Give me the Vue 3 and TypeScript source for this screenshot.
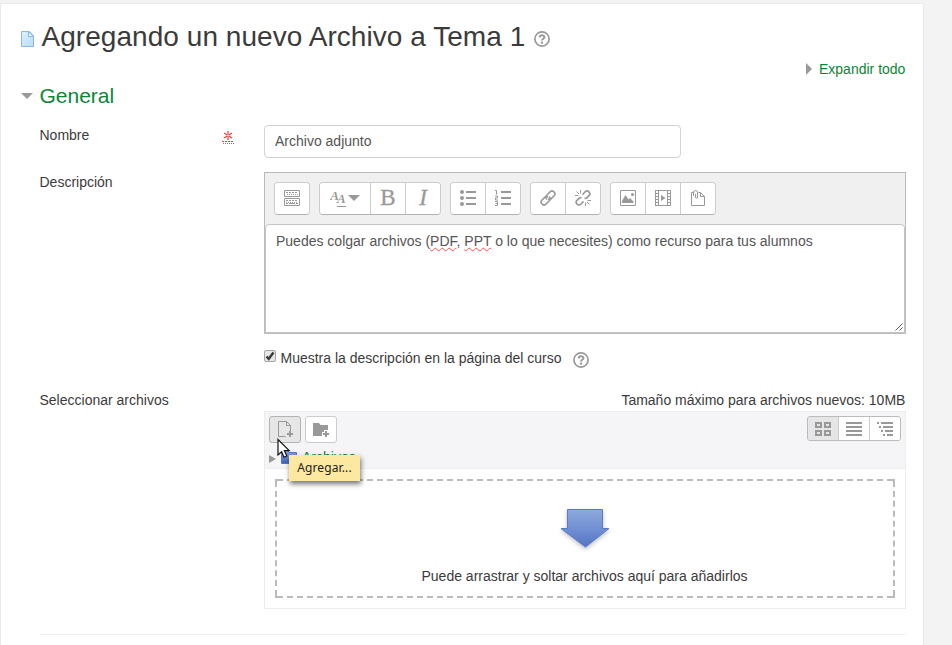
<script setup lang="ts">
import { ref } from 'vue'

const nombre = ref('Archivo adjunto')
const mostrar = ref(true)
</script>

<template>
  <main class="card">
    <header class="title">
      <svg class="doc" width="14" height="17" viewBox="0 0 14 17">
        <defs>
          <linearGradient id="docFill" x1="0" y1="0" x2="1" y2="1">
            <stop offset="0" stop-color="#d9f1fe" /><stop offset="1" stop-color="#b9dcf8" />
          </linearGradient>
        </defs>
        <path d="M.5 .5H8.500L12.500 5V15.500H.5Z" fill="url(#docFill)" stroke="#8fb3ee" />
        <path d="M7.500 .5V5.500H12.500Z" fill="#edf8ff" stroke="#8fb3ee" />
      </svg>
      <h2>Agregando un nuevo Archivo a Tema 1</h2>
      <svg class="help" width="16" height="16" viewBox="0 0 16 16">
        <circle cx="8" cy="8" r="7.100" fill="none" stroke="#999" stroke-width="1.700" />
        <path d="M5.700 6.500C5.700 3.400 10.400 3.500 10.400 6.200C10.400 7.900 8 7.700 8 9.600" fill="none" stroke="#999" stroke-width="2" />
        <rect x="6.900" y="10.600" width="2.200" height="2.100" fill="#999" />
      </svg>
    </header>

    <div class="expand">
      <svg width="6" height="12" viewBox="0 0 6 12"><path d="M0 0L6 6L0 12Z" fill="#999" /></svg>
      <a>Expandir todo</a>
    </div>

    <div class="legend">
      <svg width="12" height="6" viewBox="0 0 12 6"><path d="M0 0H12L6 6Z" fill="#999" /></svg>
      <h3>General</h3>
    </div>

    <section class="row name-row">
      <label class="label" for="nombre">Nombre</label>
      <div class="req">
        <svg width="12" height="15" viewBox="0 0 12 15">
          <path d="M6 1V10M2 3L10 8M10 3L2 8" stroke="#ff3434" stroke-width="1.200" fill="none" />
          <circle cx="6" cy="5.500" r="1" fill="#fff" />
          <path d="M0 11.500H12" stroke="#ff3434" stroke-dasharray="2 1" />
          <path d="M1 13.500H12" stroke="#777" stroke-dasharray="1 1" />
        </svg>
      </div>
      <input id="nombre" v-model="nombre" class="field" type="text" />
    </section>

    <section class="row desc-row">
      <span class="label">Descripción</span>
      <div class="editor">
        <div class="toolbar">
          <div class="group">
            <button>
              <svg width="16" height="16" viewBox="0 0 16 16" fill="none" stroke="#999">
                <path d="M.5 .5H15.500V6.500H.5ZM.5 8.500H15.500V15.500H.5Z" />
                <path d="M2 2.500H14M2 10.500H14" stroke-dasharray="2 1" />
                <path d="M3 4.500H14M2 12.500H14" stroke-dasharray="1 1" />
                <path d="M2 13.500H4M5 13.500H11M12 13.500H14" />
              </svg>
            </button>
          </div>
          <div class="group">
            <button class="style-button">
              <span class="letters"><i>A</i><i class="lower">A</i></span>
              <svg width="12" height="6" viewBox="0 0 12 6"><path d="M0 0H12L6 6Z" fill="#999" /></svg>
            </button>
            <button><span class="glyph">B</span></button>
            <button><span class="glyph italic">I</span></button>
          </div>
          <div class="group">
            <button>
              <svg width="16" height="16" viewBox="0 0 16 16" fill="#999">
                <circle cx="2" cy="2" r="2" /><circle cx="2" cy="8" r="2" /><circle cx="2" cy="14" r="2" />
                <path d="M6 1H16V3H6ZM6 7H16V9H6ZM6 13H16V15H6Z" />
              </svg>
            </button>
            <button>
              <svg width="18" height="16" viewBox="0 0 18 16" fill="#999">
                <path d="M7 1H17V3H7ZM7 7H17V9H7ZM7 13H17V15H7Z" />
                <path d="M1 .5H2.500V4.500M1 6H3.500V8H1.500V10H4M1 11.500H3.500V15.500H1M1.500 13.500H3.500" fill="none" stroke="#999" />
              </svg>
            </button>
          </div>
          <div class="group">
            <button>
              <svg width="16" height="16" viewBox="0 0 16 16" fill="none" stroke="#999" stroke-width="1.600" stroke-linecap="round">
                <path d="M6.500 8.800C5.300 7.500 5.600 6.400 6.500 5.500L10.300 1.700C12.600-.4 16.300 3.100 14.300 5.500L11 8.800C10.200 9.500 9.300 9.600 8.500 9.200" />
                <path d="M9.500 7.200C10.700 8.500 10.400 9.600 9.500 10.500L5.700 14.300C3.400 16.400-.3 12.900 1.700 10.500L5 7.200C5.800 6.500 6.700 6.400 7.500 6.800" />
              </svg>
            </button>
            <button>
              <svg width="16" height="16" viewBox="0 0 16 16" fill="none" stroke="#999" stroke-width="1.700">
                <path d="M7.500 4.600L10 2C12.600-.7 16.400 3 14 5.700L11.500 8.200L9.500 8.500" />
                <path d="M8.500 11.400L6 14C3.400 16.700-.4 13 2 10.300L4.500 7.800L6.500 7.500" />
                <path d="M5.500 0V3.500M1.500 1.500L4 4M0 5.500H3.500M12.500 10.500H16M10.500 12.500V16M12 12L14.500 14.500" stroke-width="1" />
              </svg>
            </button>
          </div>
          <div class="group">
            <button>
              <svg width="16" height="16" viewBox="0 0 16 16">
                <path d="M.5 .5H15.500V15.500H.5Z" fill="none" stroke="#999" />
                <path d="M2 13V11L5.500 5L8.500 9.500L10 8L13.500 11.500V13Z" fill="#999" /><circle cx="12.500" cy="4.500" r="1.500" fill="#999" />
              </svg>
            </button>
            <button>
              <svg width="16" height="16" viewBox="0 0 16 16">
                <path d="M0 .5H16M0 15.500H16M.5 0V16M3.500 0V16M12.500 0V16M15.500 0V16" stroke="#999" />
                <path d="M2 3V16M14 3V16" stroke="#999" stroke-width="3" stroke-dasharray="1 2" />
                <path d="M6 5L10.500 8L6 11Z" fill="#999" />
              </svg>
            </button>
            <button>
              <svg width="16" height="16" viewBox="0 0 16 16" fill="none" stroke="#999">
                <path d="M3.500 2.500H1.500V15.500H14.500V6.500L10.500 2.500H8.500" />
                <path d="M10.500 2.500V6.500H14.500M3.500 6V2C3.500 .2 7.500 .2 7.500 2V7C7.500 8.800 5.500 8.800 5.500 7V4" />
              </svg>
            </button>
          </div>
        </div>
        <div class="content">
          <p>Puedes colgar archivos (<span class="misspelt">PDF</span>, <span class="misspelt">PPT</span> o lo que necesites) como recurso para tus alumnos</p>
          <svg class="grip" width="8" height="8" viewBox="0 0 8 8"><path d="M.5 7.500L7.500 .5M4.500 7.500L7.500 4.500" stroke="#555" /></svg>
        </div>
      </div>
    </section>

    <section class="row check-row">
      <label class="check">
        <input v-model="mostrar" type="checkbox" />
        <span class="box">
          <svg v-if="mostrar" width="10" height="10" viewBox="0 0 10 10"><path d="M1.500 5.500L3.700 7.800L8.500 1.500" fill="none" stroke="#3c3c3c" stroke-width="2.400" /></svg>
        </span>
        <span>Muestra la descripción en la página del curso</span>
      </label>
      <svg class="help" width="16" height="16" viewBox="0 0 16 16">
        <circle cx="8" cy="8" r="7.100" fill="none" stroke="#999" stroke-width="1.700" />
        <path d="M5.700 6.500C5.700 3.400 10.400 3.500 10.400 6.200C10.400 7.900 8 7.700 8 9.600" fill="none" stroke="#999" stroke-width="2" />
        <rect x="6.900" y="10.600" width="2.200" height="2.100" fill="#999" />
      </svg>
    </section>

    <section class="row files-row">
      <span class="label">Seleccionar archivos</span>
      <div class="files">
        <p class="limit">Tamaño máximo para archivos nuevos: 10MB</p>
        <div class="manager">
          <div class="bar">
            <div class="tools">
              <button class="tool active">
                <svg width="17" height="17" viewBox="0 0 17 17" fill="none" stroke="#999">
                  <path d="M8.500 15.500H1.500V.5H9.500L13.500 4.500V10" /><path d="M9.500 .5V4.500H13.500" />
                  <path d="M13 10V16M10 13H16" stroke-width="2" />
                </svg>
              </button>
              <button class="tool">
                <svg width="17" height="16" viewBox="0 0 17 16">
                  <path d="M0 1H6L7.500 3H15V8H11V10H9V14H0Z" fill="#999" />
                  <path d="M13 9V15M10 12H16" stroke="#999" stroke-width="2" />
                </svg>
              </button>
              <div class="views">
                <button class="active">
                  <svg width="16" height="14" viewBox="0 0 16 14" fill="none" stroke="#999" stroke-width="2"><path d="M1 1H6V5H1ZM10 1H15V5H10ZM1 9H6V13H1ZM10 9H15V13H10Z" /></svg>
                </button>
                <button>
                  <svg width="16" height="14" viewBox="0 0 16 14" stroke="#999" stroke-width="2"><path d="M0 1H16M0 5H16M0 9H16M0 13H16" /></svg>
                </button>
                <button>
                  <svg width="16" height="14" viewBox="0 0 16 14" stroke="#999" stroke-width="2"><path d="M0 1H2M4 1H16M2 5H4M6 5H16M4 9H6M8 9H16M6 13H8M10 13H16" /></svg>
                </button>
              </div>
            </div>
            <div class="path">
              <svg class="path-arrow" width="7" height="8" viewBox="0 0 7 8"><path d="M0 0L7 4L0 8Z" fill="#999" /></svg>
              <svg class="folder" width="16" height="14" viewBox="0 0 16 14">
                <defs>
                  <linearGradient id="folder" x1="0" y1="0" x2="0" y2="1"><stop offset="0" stop-color="#8da8e2" /><stop offset="1" stop-color="#3b61bb" /></linearGradient>
                </defs>
                <path d="M.5 .5H6.500L8.500 2.500H15.500V13.500H.5Z" fill="url(#folder)" stroke="#5377c5" />
              </svg>
              <a>Archivos</a>
            </div>
            <svg class="cursor" width="14" height="21" viewBox="0 0 14 21"><path d="M1 1.500V17L4.600 13.800L7 19.300L9.800 18L7.400 12.700H12.200Z" fill="#fff" stroke="#111" stroke-width="1.200" /></svg>
            <div class="tip">Agregar...</div>
          </div>
          <div class="drop-area">
            <svg class="dashes" width="620" height="119" viewBox="0 0 620 119" fill="none" stroke="#bbb" stroke-width="2">
              <path d="M0 1H620M0 118H620" stroke-dasharray="6 4" stroke-dashoffset="-2" />
              <path d="M1 0V119M619 0V119" stroke-dasharray="6 3.910" stroke-dashoffset="-2" />
              <path d="M0 1H8M1 0V8M612 1H620M619 0V8M0 118H8M1 111V119M612 118H620M619 111V119" />
            </svg>
            <svg class="drop-arrow" width="60" height="48" viewBox="0 0 60 48">
              <defs>
                <linearGradient id="dropFill" x1="0" y1="0" x2="0" y2="1"><stop offset="0" stop-color="#8faadd" /><stop offset="1" stop-color="#5575c6" /></linearGradient>
              </defs>
              <path d="M12.500 4.500H47.500V23.500H54L30.500 42L6 23.500H12.500Z" fill="url(#dropFill)" stroke="#567bc8" />
            </svg>
            <p>Puede arrastrar y soltar archivos aquí para añadirlos</p>
          </div>
        </div>
      </div>
    </section>
    <hr />
  </main>
</template>

<style>
body {
  background: #f3f3f3;
  overflow: hidden;
}
</style>

<style scoped>
* {
  box-sizing: border-box;
}

.card {
  width: 924px;
  height: 660px;
  margin-top: 3px;
  padding: 13px 17px 0 20px;
  border: 1px solid #e9e9e9;
  background: #fff;
  font: 14px/20px "Liberation Sans", Arial, sans-serif;
  color: #3b3b3b;
}

h2, h3, p {
  margin: 0;
  font-weight: normal;
}

svg {
  display: block;
  flex: none;
}

a {
  color: #0c8536;
}

button {
  display: flex;
  align-items: center;
  justify-content: center;
  padding: 0;
  border: 0;
  background: #fff;
}

.title {
  display: flex;
  height: 42px;
}

.title h2 {
  font-size: 28px;
  line-height: 40px;
  letter-spacing: 0.05px;
  margin-left: 6.5px;
}

.title .doc {
  margin-top: 14px;
}

.title .help {
  margin: 14px 0 0 9px;
}

.expand {
  display: flex;
  align-items: center;
  justify-content: flex-end;
  gap: 7px;
  height: 20px;
  padding-right: 0.6px;
}

.legend {
  display: flex;
  align-items: center;
  gap: 6.5px;
  height: 34px;
}

.legend h3 {
  font-size: 21px;
  line-height: 34px;
  color: #0c8536;
}

.row {
  display: grid;
  grid-template-columns: 182px 42px 642px;
  margin-left: 19px;
}

.label {
  margin-left: -0.5px;
}

.name-row {
  height: 47px;
  margin-top: 12px;
}

.req {
  padding-top: 5px;
}

.field {
  width: 417px;
  height: 33px;
  padding: 4px 10px 6px;
  border: 1px solid #d3d3d3;
  border-radius: 4px;
  background: #fff;
  color: #555;
  font: inherit;
  outline: none;
}

.desc-row {
  height: 162px;
}

.editor, .files {
  grid-column: 3;
}

.editor {
  height: 162px;
  border: 1px solid #bbb;
  background: #f0f0f0;
}

.toolbar {
  display: flex;
  gap: 9px;
  height: 51px;
  padding: 9px 9px 0;
}

.group {
  display: flex;
  height: 33px;
  border: 1px solid #ccc;
  border-bottom-color: #b3b3b3;
  border-radius: 4px;
  overflow: hidden;
}

.group button {
  width: 34px;
  padding-bottom: 2px;
}

.group button + button {
  width: 35px;
  border-left: 1px solid #ccc;
}

.group .style-button {
  width: 50px;
  gap: 2px;
}

.letters {
  display: flex;
  height: 18px;
  color: #999;
  font: 700 13px/14px "Liberation Serif", serif;
}

.lower {
  height: 15px;
  margin: 3px 0 0 -2px;
  border-bottom: 1px solid #999;
}

.glyph {
  color: #999;
  font: 23px/30px "Liberation Serif", serif;
  -webkit-text-stroke: 0.3px #999;
}

.italic {
  font-style: italic;
}

.content {
  display: flex;
  justify-content: space-between;
  height: 109px;
  padding: 6px 1px 1px 10px;
  border: 1px solid #c4c4c4;
  border-radius: 4px 4px 0 0;
  background: #fff;
  color: #555;
}

.misspelt {
  text-decoration: underline wavy #ff5050 1px;
  text-decoration-skip-ink: none;
  text-underline-offset: 1px;
}

.grip {
  align-self: flex-end;
}

.check-row {
  display: flex;
  height: 20px;
  margin: 14px 0 22px 243px;
}

.check {
  display: flex;
  gap: 4.5px;
}

.check input {
  display: none;
}

.box {
  display: flex;
  width: 12px;
  height: 12px;
  margin-top: 2px;
  border: 1px solid #a6a6a6;
  border-radius: 2px;
  background: #e6e6e6;
}

.check-row .help {
  margin: 4px 0 0 11.5px;
}

.limit {
  height: 21px;
  padding-right: 0.6px;
  text-align: right;
}

.manager {
  height: 198px;
  border: 1px solid #ececec;
}

.bar {
  position: relative;
  height: 57px;
  padding: 4px;
  border-bottom: 1px solid #eee;
  background: #f5f5f7;
}

.tools {
  display: flex;
  gap: 4px;
}

.tool {
  width: 32px;
  height: 27px;
  border: 1px solid #ccc;
  border-radius: 3px;
}

.active, .tool.active {
  background: #e6e6e6;
  border-color: #b3b3b3;
}

.views {
  display: flex;
  height: 25px;
  margin-left: auto;
  border: 1px solid #bbb;
  border-radius: 3px;
  overflow: hidden;
}

.views button {
  width: 30px;
}

.views button + button {
  width: 31px;
  border-left: 1px solid #ccc;
}

.path {
  display: flex;
  align-items: center;
  height: 20px;
  margin-top: 4px;
  gap: 5px;
  color: #0c8536;
}

.path-arrow {
  margin-top: 4px;
}

.cursor {
  position: absolute;
  left: 12px;
  top: 26px;
  z-index: 2;
}

.tip {
  position: absolute;
  left: 24px;
  top: 43px;
  width: 71px;
  height: 26px;
  background: #fce8a0;
  box-shadow: 1px 3px 5px rgba(0, 0, 0, 0.55);
  color: #222;
  font: 12px/25px "Noto Sans", sans-serif;
  letter-spacing: 0.12px;
  text-align: center;
}

.drop-area {
  display: grid;
  grid-template-rows: 80px 1fr;
  justify-items: center;
  height: 119px;
  margin: 10px;
}

.dashes {
  grid-area: 1 / 1 / 3 / 2;
}

.drop-arrow {
  grid-area: 1 / 1;
  margin-top: 26px;
  filter: drop-shadow(0 2px 2px rgba(0, 0, 0, 0.25));
}

.drop-area p {
  grid-area: 2 / 1;
  margin: 7px 1px 0 0;
}

hr {
  height: 1px;
  margin: 25px 0 0 19px;
  border: 0;
  background: #f0f0f0;
}
</style>
